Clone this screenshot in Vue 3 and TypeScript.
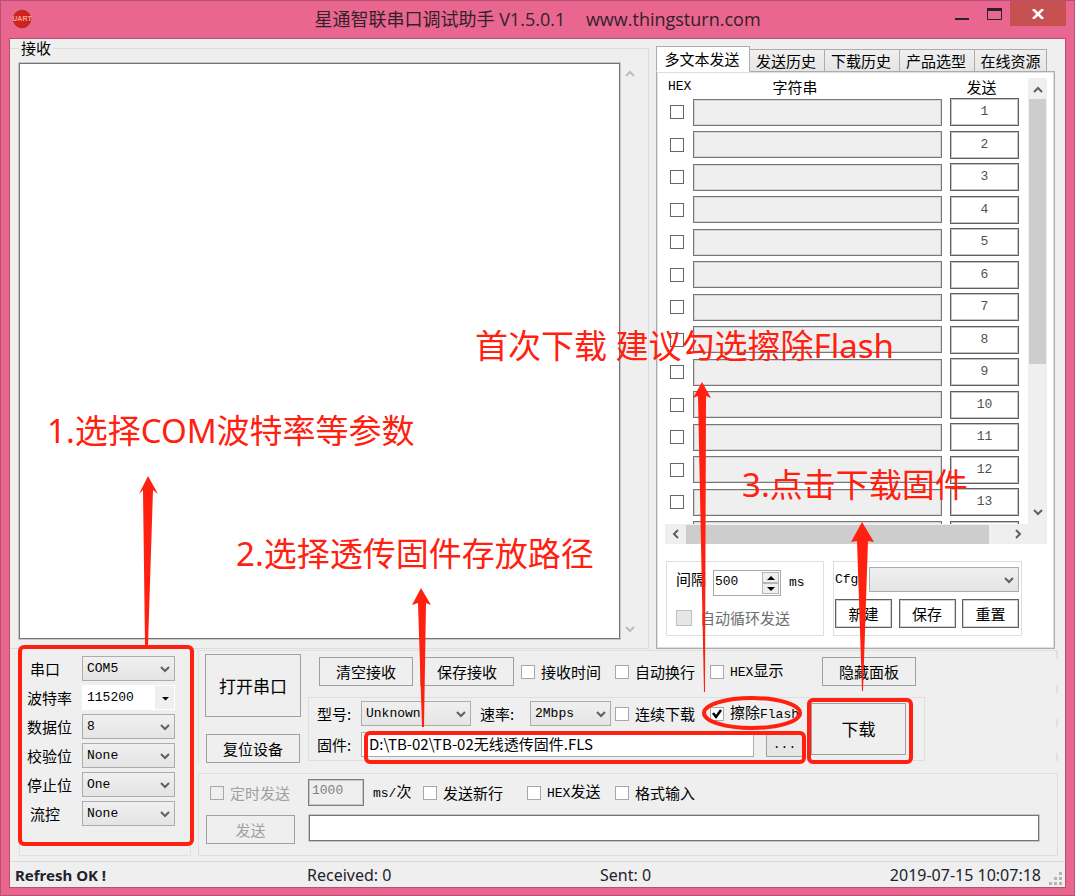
<script setup lang="ts">
import { reactive, ref } from 'vue'

interface PortField {
  id: string
  label: string
  value: string
  editable?: boolean
}

const portFields = reactive<PortField[]>([
  { id: 'port', label: '串口', value: 'COM5' },
  { id: 'baud', label: '波特率', value: '115200', editable: true },
  { id: 'data', label: '数据位', value: '8' },
  { id: 'parity', label: '校验位', value: 'None' },
  { id: 'stop', label: '停止位', value: 'One' },
  { id: 'flow', label: '流控', value: 'None' },
])

const tabs = ['多文本发送', '发送历史', '下载历史', '产品选型', '在线资源']
const activeTab = ref(0)
const rows = reactive([
  ...Array.from({ length: 13 }, (_, i) => ({ caption: String(i + 1), hex: false, text: '' })),
  { caption: '', hex: false, text: '' },
])

const received = ref('')
const interval = ref('500')
const period = ref('1000')
const message = ref('')
const firmware = ref('D:\\TB-02\\TB-02无线透传固件.FLS')
const eraseFlash = ref(true)
</script>

<template>
  <div class="window">
    <header class="titlebar">
      <svg class="logo" viewBox="0 0 22 22" aria-hidden="true">
        <circle cx="11" cy="11" r="10" fill="#e58a86" />
        <circle cx="11" cy="11" r="9" fill="#d3201c" stroke="#a8332f" stroke-width="1" />
        <text x="11" y="13" text-anchor="middle" font-size="7" font-weight="700" fill="#f3a69a" font-family="Liberation Sans, sans-serif">UART</text>
      </svg>
      <h1>星通智联串口调试助手 V1.5.0.1 <span class="site">www.thingsturn.com</span></h1>
      <div class="caption">
        <button class="cap" aria-label="最小化"><svg width="14" height="14" viewBox="0 0 14 14"><path d="M0 12h14" stroke="#2a2028" stroke-width="2" /></svg></button>
        <button class="cap" aria-label="最大化"><svg width="15" height="12" viewBox="0 0 15 12"><path d="M.5.5h14v11H.5z" fill="none" stroke="#2a2028" /><path d="M0 1.5h15" stroke="#2a2028" stroke-width="3" /></svg></button>
        <button class="cap close" aria-label="关闭"><svg width="12" height="10" viewBox="0 0 12 10"><path d="M1 0l10 10M11 0L1 10" stroke="#fff" stroke-width="2.6" /></svg></button>
      </div>
    </header>

    <main class="client">
      <div class="upper">
        <fieldset class="receive">
          <legend><label for="received">接收</label></legend>
          <div class="receive-body">
            <textarea id="received" v-model="received" class="sunken"></textarea>
            <div class="ghost-bar" aria-hidden="true">
              <svg class="chev pale" viewBox="0 0 10 7"><path d="M1 6l4-4 4 4" /></svg>
              <svg class="chev pale" viewBox="0 0 10 7"><path d="M1 1l4 4 4-4" /></svg>
            </div>
          </div>
        </fieldset>

        <section class="side">
          <div class="tabs" role="tablist">
            <button v-for="(t, i) in tabs" :key="t" role="tab" :aria-selected="i === activeTab" :class="['tab', { active: i === activeTab }]" @click="activeTab = i">{{ t }}</button>
          </div>
          <div class="panel">
            <div class="scroller">
              <div class="scroll-view">
                <div class="send-grid head">
                  <span class="latin">HEX</span><span class="center">字符串</span><span class="center">发送</span>
                </div>
                <div class="clip">
                  <div class="rows">
                    <div v-for="(r, i) in rows" :key="i" class="send-grid">
                      <input v-model="r.hex" type="checkbox" class="dark" :aria-label="`HEX ${i + 1}`" />
                      <input v-model="r.text" type="text" class="line" :aria-label="`字符串 ${i + 1}`" />
                      <button class="num" :aria-label="`发送 ${i + 1}`">{{ r.caption }}</button>
                    </div>
                  </div>
                </div>
              </div>
              <div class="vbar" aria-hidden="true">
                <svg class="chev" viewBox="0 0 10 7"><path d="M1 6l4-4 4 4" /></svg>
                <div class="vtrack"><div class="vthumb"></div></div>
                <svg class="chev" viewBox="0 0 10 7"><path d="M1 1l4 4 4-4" /></svg>
              </div>
              <div class="hbar" aria-hidden="true">
                <svg class="chev tall" viewBox="0 0 7 10"><path d="M6 1L2 5l4 4" /></svg>
                <div class="hthumb"></div>
                <svg class="chev tall" viewBox="0 0 7 10"><path d="M1 1l4 4-4 4" /></svg>
              </div>
            </div>

            <div class="boxes">
              <div class="box timing">
                <div class="timing-row">
                  <label for="interval">间隔</label>
                  <span class="spinner">
                    <input id="interval" v-model="interval" type="text" class="latin" />
                    <span class="steps">
                      <button aria-label="增加"><svg width="8" height="4" viewBox="0 0 8 4"><path d="M0 4l4-4 4 4z" /></svg></button>
                      <button aria-label="减少"><svg width="8" height="4" viewBox="0 0 8 4"><path d="M0 0h8L4 4z" /></svg></button>
                    </span>
                  </span>
                  <span class="latin">ms</span>
                </div>
                <label class="check loop"><input type="checkbox" disabled />自动循环发送</label>
              </div>
              <div class="box config">
                <div class="config-row">
                  <label for="cfg" class="latin">Cfg</label>
                  <span class="combo"><select id="cfg"><option></option></select><svg class="chev" viewBox="0 0 10 7"><path d="M1 1l4 4 4-4" /></svg></span>
                </div>
                <div class="config-buttons">
                  <button>新建</button><button>保存</button><button>重置</button>
                </div>
              </div>
            </div>
          </div>
        </section>
      </div>

      <div class="lower">
        <section class="port">
          <div v-for="f in portFields" :key="f.id" class="port-row">
            <label :for="f.id" :class="{ short: f.label.length === 2 }">{{ f.label }}</label>
            <span :class="['combo', { editable: f.editable }]">
              <select :id="f.id" v-model="f.value"><option>{{ f.value }}</option></select>
              <svg v-if="f.editable" class="chev" viewBox="0 0 10 7"><path class="solid" d="M2 2h7L5.5 5.5z" /></svg>
              <svg v-else class="chev" viewBox="0 0 10 7"><path d="M1 1l4 4 4-4" /></svg>
            </span>
          </div>
        </section>

        <div class="work">
          <section class="control">
            <div class="device">
              <button class="open">打开串口</button>
              <button class="reset">复位设备</button>
            </div>
            <div class="options">
              <div class="option-row">
                <button class="wide">清空接收</button>
                <button class="wide second">保存接收</button>
                <label class="check c-a"><input type="checkbox" />接收时间</label>
                <label class="check c-b"><input type="checkbox" />自动换行</label>
                <label class="check c-c"><input type="checkbox" /><span><span class="latin">HEX</span>显示</span></label>
                <button class="wide">隐藏面板</button>
              </div>
              <div class="box download">
                <div class="download-form">
                  <div class="form-row">
                    <label for="model">型号:</label>
                    <span class="combo model"><select id="model"><option>Unknown</option></select><svg class="chev" viewBox="0 0 10 7"><path d="M1 1l4 4 4-4" /></svg></span>
                    <label for="rate" class="rate-label">速率:</label>
                    <span class="combo rate"><select id="rate"><option>2Mbps</option></select><svg class="chev" viewBox="0 0 10 7"><path d="M1 1l4 4 4-4" /></svg></span>
                    <label class="check c-b"><input type="checkbox" />连续下载</label>
                    <label class="check c-c"><input v-model="eraseFlash" type="checkbox" /><span>擦除<span class="latin">Flash</span></span></label>
                  </div>
                  <div class="form-row">
                    <label for="firmware">固件:</label>
                    <input id="firmware" v-model="firmware" type="text" class="path" />
                    <button class="browse latin" aria-label="浏览">...</button>
                  </div>
                </div>
                <button class="go">下载</button>
              </div>
            </div>
          </section>

          <section class="box send">
            <div class="send-row">
              <label class="check off c-t"><input type="checkbox" disabled />定时发送</label>
              <input id="period" v-model="period" type="text" class="period latin" disabled />
              <label for="period" class="unit"><span class="latin">ms/</span>次</label>
              <label class="check c-n"><input type="checkbox" />发送新行</label>
              <label class="check c-h"><input type="checkbox" /><span><span class="latin">HEX</span>发送</span></label>
              <label class="check c-b"><input type="checkbox" />格式输入</label>
            </div>
            <div class="send-row top">
              <button class="submit" disabled>发送</button>
              <input v-model="message" type="text" class="message sunken" aria-label="发送内容" />
            </div>
          </section>
        </div>
      </div>

      <footer class="status">
        <strong>Refresh OK !</strong>
        <span>Received: 0</span>
        <span>Sent: 0</span>
        <time>2019-07-15 10:07:18</time>
        <svg class="grip" width="14" height="14" viewBox="0 0 14 14" aria-hidden="true">
          <path d="M11 1h3v3h-3zM6 6h3v3H6zM11 6h3v3h-3zM1 11h3v3H1zM6 11h3v3H6zM11 11h3v3h-3z" />
        </svg>
      </footer>
    </main>

    <svg class="notes" width="1075" height="896" viewBox="0 0 1075 896">
      <g fill="none" stroke="#ff2010" stroke-width="4">
        <rect x="20" y="647" width="172" height="197" rx="4" />
        <rect x="366" y="733" width="438" height="29" rx="4" />
        <rect x="809" y="700" width="102" height="62" rx="4" />
        <ellipse cx="752" cy="713" rx="48" ry="15" />
      </g>
      <g fill="#ff2010">
        <path d="M145 645L143 490L139 494L148 476L158 494L153 490L148 645z" />
        <path d="M422 727L418 603L412 605L421 588L431 605L426 603L424 727z" />
        <path d="M704 692L698 396L693 398L702 382L711 398L706 396L705 692z" />
        <path d="M862 691L857 541L851 542L862 522L874 542L868 541L863 691z" />
      </g>
      <g class="note-text">
        <text x="47" y="443">1.选择COM波特率等参数</text>
        <text x="236" y="566">2.选择透传固件存放路径</text>
        <text x="475" y="358">首次下载 建议勾选擦除Flash</text>
        <text x="742" y="497">3.点击下载固件</text>
      </g>
    </svg>
  </div>
</template>

<style>
body {
  background: #e8668f;
}
</style>

<style scoped>
* {
  box-sizing: border-box;
}
.window {
  position: relative;
  display: flex;
  flex-direction: column;
  min-height: 100vh;
  padding: 0 8px 7px;
  border: 1px solid #b9506f;
  background: #e8668f;
  color: #000;
  font: 15px/18px "Noto Sans CJK SC", sans-serif;
}
button,
input,
select,
textarea {
  margin: 0;
  padding: 0;
  border-radius: 0;
  font: inherit;
  color: inherit;
}
button {
  border: 1px solid #a0a0a0;
  background: #efefef;
  white-space: nowrap;
}
.latin {
  font-family: "Liberation Mono", monospace;
  font-size: 13px;
}
.titlebar {
  display: grid;
  grid-template-columns: 112px 1fr 112px;
  height: 37px;
}
.logo {
  width: 22px;
  height: 22px;
  margin: 7px 0 0 2px;
}
h1 {
  margin: 0;
  text-align: center;
  font: 18px/36px "Open Sans", "Noto Sans CJK SC", sans-serif;
  white-space: nowrap;
  color: #33212a;
}
.site {
  margin-left: 16px;
}
.caption {
  display: flex;
  justify-content: flex-end;
  height: 25px;
}
.cap {
  flex: 0 0 32px;
  padding: 0;
  border: 0;
  background: none;
}
.cap svg {
  display: block;
  margin: auto;
}
.cap.close {
  flex-basis: 56px;
  background: #c75050;
}
.client {
  flex: 1;
  display: flex;
  flex-direction: column;
  border: 1px solid #b9506f;
  background: #efefef;
}
.upper {
  display: flex;
  gap: 7px;
  padding-right: 10px;
}
.receive {
  flex: 1;
  min-width: 0;
  margin: 0;
  padding: 6px 8px 9px 9px;
  border: 1px solid #dcdcdc;
  border-left: 0;
}
.receive legend {
  padding: 0 2px;
  height: 18px;
}
.receive-body {
  display: flex;
  height: 100%;
}
.sunken {
  border: 1px solid #747474;
  outline: 1px solid #c8c8c8;
  background: #fff;
}
.receive textarea {
  flex: 1;
  resize: none;
}
.ghost-bar {
  flex: 0 0 20px;
  display: flex;
  flex-direction: column;
  align-items: center;
  justify-content: space-between;
  padding: 7px 0 6px;
}
.chev {
  width: 10px;
  height: 7px;
  fill: none;
  stroke: #606060;
  stroke-width: 2;
  flex: none;
}
.chev.tall {
  width: 7px;
  height: 10px;
}
.chev.pale {
  stroke: #bdbdbd;
}
.chev .solid {
  fill: #000;
  stroke: none;
}
.side {
  flex: 0 0 399px;
  display: flex;
  flex-direction: column;
  padding-top: 7px;
}
.tabs {
  display: flex;
  align-items: flex-end;
  height: 26px;
}
.tab {
  width: 75px;
  height: 23px;
  padding-right: 2px;
  border: 1px solid #acacac;
  border-left-width: 0;
  background: linear-gradient(#f0f0f0, #e5e5e5);
}
.tab:last-child {
  width: 72px;
  padding: 0;
}
.tab.active {
  position: relative;
  width: 94px;
  height: 26px;
  border-left-width: 1px;
  border-bottom-color: #fff;
  background: #fff;
}
.panel {
  margin-top: -1px;
  flex: 1;
  padding: 6px 7px 12px 8px;
  border: 1px solid #acacac;
  outline: 1px solid #dedede;
  outline-offset: -2px;
  background: #fff;
}
.scroller {
  display: grid;
  grid-template-columns: 1fr 19px;
  grid-template-rows: 446px 20px;
}
.scroll-view {
  padding-right: 9px;
}
.send-grid {
  display: grid;
  grid-template-columns: 14px 1fr 69px;
  column-gap: 9px;
  align-items: center;
  height: 28px;
  padding-left: 5px;
}
.send-grid .line {
  margin-right: -1px;
}
.send-grid.head {
  grid-template-columns: 24px 206px 1fr;
  column-gap: 0;
  height: 20px;
  padding: 0 0 3px 3px;
}
.head .center:last-child {
  padding-left: 46px;
}
.center {
  text-align: center;
}
.clip {
  height: 426px;
  overflow: hidden;
}
.rows {
  display: flex;
  flex-direction: column;
  justify-content: space-between;
  height: 451px;
}
.line {
  min-width: 0;
  height: 27px;
  border: 1px solid #777;
  outline: 1px solid #d4d4d4;
  outline-offset: -2px;
  background: #efefef;
}
.num {
  height: 28px;
  border-color: #606060;
  outline: 1px solid #c4c4c4;
  outline-offset: -2px;
  background: #fff;
  color: #505050;
  font: 13px/18px "Liberation Mono", monospace;
}
input[type='checkbox'] {
  appearance: none;
  flex: none;
  width: 14px;
  height: 14px;
  border: 1px solid #a8a8a8;
  background: #fff;
}
input[type='checkbox'].dark {
  border-color: #666;
}
input[type='checkbox']:checked {
  background: #fff url("data:image/svg+xml,%3Csvg xmlns='http://www.w3.org/2000/svg' viewBox='0 0 12 12'%3E%3Cpath d='M2 5l3 4L10 2' fill='none' stroke='%23000' stroke-width='2.5'/%3E%3C/svg%3E");
}
input[type='checkbox']:disabled {
  background: #efefef;
}
.vbar {
  display: flex;
  flex-direction: column;
  align-items: center;
  padding: 8px 0;
  background: #efefef;
}
.vtrack {
  flex: 1;
  align-self: stretch;
  margin: 6px 1px;
}
.vthumb {
  height: 265px;
  background: #cdcdcd;
}
.hbar {
  grid-column: 1 / -1;
  display: grid;
  grid-template-columns: 21px 303px 58px 1fr;
  align-items: center;
  justify-items: center;
  background: #efefef;
}
.hthumb {
  width: 100%;
  height: 19px;
  background: #cdcdcd;
}
.boxes {
  display: flex;
  gap: 9px;
  margin: 17px 25px 0 1px;
}
.box {
  border: 1px solid #dedede;
}
.timing {
  flex: 0 0 158px;
  padding: 8px 9px 8px;
}
.timing-row {
  display: flex;
  align-items: center;
  gap: 7px;
  height: 26px;
}
.timing-row label {
  align-self: flex-start;
}
.timing-row > .latin {
  margin-left: 1px;
}
.spinner {
  display: flex;
  width: 68px;
  height: 26px;
  padding: 1px;
  border: 1px solid #a8a8a8;
  background: #fff;
}
.spinner input {
  flex: 1;
  min-width: 0;
  padding-bottom: 3px;
  border: 0;
}
.steps {
  flex: 0 0 17px;
  display: flex;
  flex-direction: column;
}
.steps button {
  flex: 1;
  display: flex;
  align-items: center;
  justify-content: center;
  border-color: #b4b4b4;
}
.check {
  display: flex;
  align-items: center;
  gap: 6px;
  white-space: nowrap;
}
.loop {
  margin-top: 13px;
  gap: 8px;
  color: #6d6d6d;
}
.loop input[type='checkbox'] {
  width: 16px;
  height: 16px;
  background: #e6e6e6;
  border-color: #c0c0c0;
}
.config {
  flex: 1;
  padding: 5px 2px 5px 1px;
}
.config-row {
  display: flex;
  align-items: center;
}
.config-row label {
  flex: 0 0 34px;
}
.config-row .combo {
  flex: 1;
}
.config-buttons {
  display: flex;
  justify-content: space-between;
  margin-top: 7px;
}
.config-buttons button {
  flex: 0 0 57px;
  height: 29px;
  border-color: #606060;
  outline: 1px solid #d0d0d0;
  outline-offset: -2px;
  background: #fff;
}
.combo {
  position: relative;
  display: block;
  height: 25px;
}
.combo select {
  appearance: none;
  display: block;
  width: 100%;
  height: 100%;
  padding: 0 20px 0 4px;
  border: 1px solid #acacac;
  background: linear-gradient(#f0f0f0, #e4e4e4);
  font: 13px/20px "Liberation Mono", monospace;
}
.combo .chev {
  position: absolute;
  right: 5px;
  top: 10px;
  pointer-events: none;
}
.combo.editable select {
  border-color: #fff;
  background: linear-gradient(90deg, #fff 72px, #efefef 72px);
}
.lower {
  display: flex;
  gap: 7px;
  padding: 1px 7px 5px 9px;
}
.port {
  flex: 0 0 172px;
  display: flex;
  flex-direction: column;
  gap: 4px;
  padding: 6px 15px 0 6px;
  border: 1px solid #e0e0e0;
  border-top: 0;
}
.port-row {
  display: grid;
  grid-template-columns: 48px 1fr;
  column-gap: 8px;
  align-items: center;
}
.port-row label {
  padding-left: 1px;
}
.port-row label.short {
  padding-left: 4px;
}
.work {
  flex: 1;
  min-width: 0;
  display: flex;
  flex-direction: column;
  gap: 8px;
}
.control {
  position: relative;
  display: flex;
  gap: 7px;
  height: 115px;
  border-top: 1px solid #e0e0e0;
  border-left: 1px solid #e0e0e0;
}
.control::after {
  content: '';
  position: absolute;
  top: 0;
  right: 0;
  bottom: 0;
  width: 2px;
  background: repeating-linear-gradient(#e0e0e0 0 8px, transparent 8px 34px);
}
.device {
  flex: 0 0 96px;
  display: flex;
  flex-direction: column;
  justify-content: space-between;
  margin-left: 6px;
  padding: 3px 0 2px;
}
.open {
  height: 63px;
  font-size: 17px;
}
.reset {
  height: 29px;
  margin: 0 1px;
}
.options {
  flex: 1;
  display: flex;
  flex-direction: column;
  padding-top: 6px;
}
.option-row {
  display: flex;
  align-items: center;
  margin-left: 11px;
  height: 29px;
}
.wide {
  width: 94px;
  height: 29px;
}
.wide.second {
  margin: 0 7px;
}
.c-a {
  flex: 0 0 94px;
}
.c-b {
  flex: 0 0 95px;
}
.c-c {
  flex: 0 0 94px;
}
.option-row .c-c {
  flex-basis: 112px;
}
.download {
  display: flex;
  width: 617px;
  height: 64px;
  margin-top: 11px;
  padding: 3px 0 2px 8px;
}
.download-form {
  flex: 0 0 494px;
  display: flex;
  flex-direction: column;
  gap: 6px;
}
.form-row {
  display: flex;
  align-items: center;
  height: 25px;
}
.form-row > label:first-child {
  flex: 0 0 44px;
}
.model {
  flex: 0 0 110px;
}
.rate-label {
  flex: 0 0 50px;
  margin-left: 9px;
}
.rate {
  flex: 0 0 81px;
  margin-right: 4px;
}
.path {
  flex: 0 0 393px;
  height: 25px;
  padding: 0 7px 3px;
  border: 1px solid #acacac;
  background: #fff;
}
.browse {
  flex: 0 0 37px;
  height: 24px;
  margin-left: 12px;
  background: #e6e6e6;
}
.go {
  width: 95px;
  height: 52px;
  margin-top: 2px;
  font-size: 17px;
}
.send {
  display: flex;
  flex-direction: column;
  gap: 9px;
  padding: 5px 18px 11px 7px;
}
.send-row {
  display: flex;
  align-items: center;
}
.send-row.top {
  align-items: flex-start;
}
.c-t {
  flex: 0 0 102px;
  padding-left: 4px;
}
.off {
  color: #a0a0a0;
}
.period {
  width: 56px;
  height: 27px;
  padding: 0 3px 5px;
  border: 1px solid #7c7c7c;
  outline: 1px solid #c8c8c8;
  outline-offset: -2px;
  background: #efefef;
  color: #808080;
}
.unit {
  flex: 0 0 50px;
  margin-left: 9px;
  white-space: nowrap;
}
.c-n {
  flex: 0 0 104px;
}
.c-h {
  flex: 0 0 88px;
}
.submit {
  flex: 0 0 89px;
  height: 29px;
  margin-right: 14px;
  color: #a0a0a0;
}
.message {
  flex: 1;
  min-width: 0;
  height: 26px;
}
.status {
  flex: 1;
  display: grid;
  grid-template-columns: 292px 293px 1fr auto 14px;
  align-items: center;
  min-height: 26px;
  padding: 0 3px 0 5px;
  border-top: 1px solid #dadada;
  font: 16px/20px "Noto Sans", sans-serif;
  color: #22222c;
}
.status strong {
  font-size: 15px;
}
.status time {
  margin-right: 7px;
}
.grip {
  margin-top: 6px;
  fill: #b4b4b4;
}
.notes {
  position: absolute;
  left: -1px;
  top: -1px;
  pointer-events: none;
}
.note-text {
  fill: #ff2010;
  font: 400 33px "Noto Sans", "Noto Sans CJK SC", sans-serif;
}
</style>
